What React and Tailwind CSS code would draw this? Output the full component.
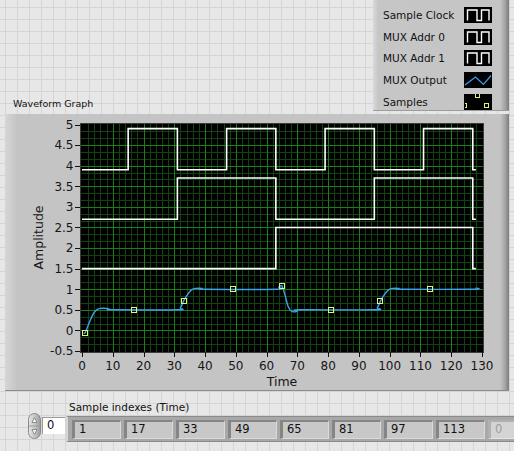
import React from "react";

const X = (t) => 82 + (t * 400) / 130;
const Y = (v) => 124.5 + (5 - v) * 41.18;
const px = (n) => Math.round(n) + 0.5;

function stepPath(trans, end) {
  let d = `M${X(trans[0][0]).toFixed(2)},${Y(trans[0][1]).toFixed(2)}`;
  for (let i = 1; i < trans.length; i++) {
    d += ` H${X(trans[i][0]).toFixed(2)} V${Y(trans[i][1]).toFixed(2)}`;
  }
  d += ` H${X(end).toFixed(2)}`;
  return d;
}

function smooth(pts) {
  const P = pts.map(([t, v]) => [X(t), Y(v)]);
  const f = (p) => `${p[0].toFixed(2)},${p[1].toFixed(2)}`;
  let d = `M${f(P[0])}`;
  for (let i = 0; i < P.length - 1; i++) {
    const p0 = P[i - 1] || P[i];
    const p1 = P[i];
    const p2 = P[i + 1];
    const p3 = P[i + 2] || P[i + 1];
    const c1 = [p1[0] + (p2[0] - p0[0]) / 6, p1[1] + (p2[1] - p0[1]) / 6];
    const c2 = [p2[0] - (p3[0] - p1[0]) / 6, p2[1] - (p3[1] - p1[1]) / 6];
    d += ` C${f(c1)} ${f(c2)} ${f(p2)}`;
  }
  return d;
}

const clock = [[0, 3.9], [15, 4.9], [31, 3.9], [47, 4.9], [63, 3.9], [79, 4.9], [95, 3.9], [111, 4.9], [127, 3.9]];
const addr0 = [[0, 2.7], [31, 3.7], [63, 2.7], [95, 3.7], [127, 2.7]];
const addr1 = [[0, 1.5], [63, 2.5], [127, 1.5]];

const mux = [
  [0.5, -0.06], [1, -0.06], [2, 0.12], [3, 0.3], [4, 0.44], [5, 0.51], [6, 0.535], [8, 0.535], [9, 0.51], [10, 0.5],
  [31, 0.5], [32, 0.55], [33, 0.71], [34, 0.84], [35, 0.94], [36, 1.0], [37, 1.02], [39, 1.02], [40, 1.0],
  [63, 1.0], [64, 1.05], [65, 1.08], [66, 0.85], [67, 0.58], [68, 0.47], [69, 0.45], [70, 0.47], [71, 0.5],
  [95, 0.5], [96, 0.55], [97, 0.71], [98, 0.84], [99, 0.94], [100, 1.0], [101, 1.02], [103, 1.02], [104, 1.0],
  [127, 1.0], [128, 1.03],
];

const samples = [[1, -0.06], [17, 0.5], [33, 0.71], [49, 1.0], [65, 1.08], [81, 0.5], [97, 0.71], [113, 1.0]];

function Chart() {
  const vLines = [];
  for (let t = 2; t < 130; t += 2) {
    vLines.push({ x: px(X(t)), major: t % 10 === 0 });
  }
  const hLines = [];
  for (let k = 1; k < 33; k++) {
    hLines.push({ y: px(Y(-0.5 + k / 6)), major: k % 3 === 0 });
  }
  const yTicks = [];
  for (let k = 0; k <= 11; k++) yTicks.push(-0.5 + k * 0.5);
  const xTicks = [];
  for (let t = 0; t <= 130; t += 10) xTicks.push(t);

  return (
    <svg width="504" height="277" viewBox="5 114 504 277" className="block" fontFamily="'DejaVu Sans', sans-serif">
      <rect x="81" y="124" width="402" height="228" fill="#000" />
      <g shapeRendering="crispEdges">
        {vLines.filter((l) => !l.major).map((l, i) => (
          <line key={"vm" + i} x1={l.x} x2={l.x} y1="124" y2="352" stroke="#124212" strokeWidth="1" />
        ))}
        {hLines.filter((l) => !l.major).map((l, i) => (
          <line key={"hm" + i} y1={l.y} y2={l.y} x1="81" x2="483" stroke="#124212" strokeWidth="1" />
        ))}
        {vLines.filter((l) => l.major).map((l, i) => (
          <line key={"vM" + i} x1={l.x} x2={l.x} y1="124" y2="352" stroke="#1a7e1a" strokeWidth="1" />
        ))}
        {hLines.filter((l) => l.major).map((l, i) => (
          <line key={"hM" + i} y1={l.y} y2={l.y} x1="81" x2="483" stroke="#1a7e1a" strokeWidth="1" />
        ))}
        <rect x="80.5" y="123.5" width="403" height="229" fill="none" stroke="#3c3c3c" strokeWidth="1" />
      </g>

      <path d={stepPath(clock, 128)} fill="none" stroke="#fff" strokeWidth="1.6" />
      <path d={stepPath(addr0, 128)} fill="none" stroke="#fff" strokeWidth="1.6" />
      <path d={stepPath(addr1, 128)} fill="none" stroke="#fff" strokeWidth="1.6" />
      <path d={smooth(mux)} fill="none" stroke="#3ba2ee" strokeWidth="1.4" />
      {samples.map(([t, v], i) => (
        <rect key={"s" + i} x={Math.round(X(t)) - 2.5} y={Math.round(Y(v)) - 2.5} width="5" height="5" fill="none" stroke="#e4f27a" strokeWidth="1" shapeRendering="crispEdges" />
      ))}

      <g shapeRendering="crispEdges">
        {yTicks.map((v) => (
          <line key={"yt" + v} x1="75" x2="80" y1={px(Y(v))} y2={px(Y(v))} stroke="#111" strokeWidth="1" />
        ))}
        {xTicks.map((t) => (
          <line key={"xt" + t} x1={px(X(t))} x2={px(X(t))} y1="352" y2="357" stroke="#111" strokeWidth="1" />
        ))}
      </g>
      {yTicks.map((v) => (
        <text key={"yl" + v} x="73.5" y={Y(v) + 4.3} textAnchor="end" fontSize="12" fill="#151515">
          {v === 0 ? "0" : String(v)}
        </text>
      ))}
      {xTicks.map((t) => (
        <text key={"xl" + t} x={X(t)} y="369.5" textAnchor="middle" fontSize="12" fill="#151515">
          {t}
        </text>
      ))}
      <text x="282" y="386" textAnchor="middle" fontSize="12.5" fill="#151515">Time</text>
      <text transform="translate(42.5 237.5) rotate(-90)" textAnchor="middle" fontSize="12.5" fill="#151515">Amplitude</text>
    </svg>
  );
}

function SquareSwatch() {
  return (
    <svg width="28" height="16" className="block">
      <rect width="28" height="16" fill="#000" />
      <path d="M3.5 13.5 V3 H13 V13.5 H17.5 V3 H25 V13.5" fill="none" stroke="#fff" strokeWidth="1.4" />
    </svg>
  );
}

function WaveSwatch() {
  return (
    <svg width="28" height="16" className="block">
      <rect width="28" height="16" fill="#000" />
      <path d="M1 13 L11.5 5 L19.5 12.5 L27 3.5" fill="none" stroke="#3ba2ee" strokeWidth="1.2" />
    </svg>
  );
}

function SampleSwatch() {
  return (
    <svg width="28" height="16" className="block">
      <rect width="28" height="16" fill="#000" />
      <path d="M0.5 9.5 H2.5 V13.5 H0.5" fill="none" stroke="#e4f27a" strokeWidth="1" shapeRendering="crispEdges" />
      <path d="M11.5 0 V3.5 H15.5 V0" fill="none" stroke="#e4f27a" strokeWidth="1" shapeRendering="crispEdges" />
      <rect x="20.5" y="9.5" width="4" height="4" fill="none" stroke="#e4f27a" strokeWidth="1" shapeRendering="crispEdges" />
    </svg>
  );
}

const legend = [
  ["Sample Clock", <SquareSwatch />],
  ["MUX Addr 0", <SquareSwatch />],
  ["MUX Addr 1", <SquareSwatch />],
  ["MUX Output", <WaveSwatch />],
  ["Samples", <SampleSwatch />],
];

const values = ["1", "17", "33", "49", "65", "81", "97", "113"];

function Spinner() {
  return (
    <svg width="15" height="26" className="block shrink-0">
      <defs>
        <linearGradient id="spg" x1="0" x2="1" y1="0" y2="0">
          <stop offset="0" stopColor="#e6e6e6" />
          <stop offset="0.5" stopColor="#c8c8c8" />
          <stop offset="1" stopColor="#9a9a9a" />
        </linearGradient>
      </defs>
      <rect x="1.5" y="0.5" width="12" height="25" rx="6" fill="url(#spg)" stroke="#8a8a8a" />
      <line x1="2" x2="13" y1="13" y2="13" stroke="#9a9a9a" />
      <path d="M7.5 4.5 L10 9.5 H5 Z" fill="#f4f4f4" stroke="#7a7a7a" strokeWidth="0.8" />
      <path d="M7.5 21.5 L10 16.5 H5 Z" fill="#f4f4f4" stroke="#7a7a7a" strokeWidth="0.8" />
    </svg>
  );
}

export default function App() {
  return (
    <div className="w-[514px] h-[451px] overflow-hidden flex flex-col text-[#111] font-['DejaVu_Sans',sans-serif] bg-[#e7e7e7] [background-image:linear-gradient(to_right,#d5d5d5_1px,transparent_1px),linear-gradient(to_bottom,#d5d5d5_1px,transparent_1px)] [background-size:12px_12px] [background-position:5px_7px]">
      <div className="flex items-end h-[111px] shrink-0">
        <div className="pl-[13px] pb-[1px] text-[9.5px] leading-[12px]">Waveform Graph</div>
        <div className="ml-auto mr-[5px] w-[136px] h-[111px] pt-[4px] pl-[10px] pr-[17px] flex flex-col border-b border-[#9c9c9c] bg-[linear-gradient(to_right,#dadada,#c6c6c6_5px,#c4c4c4_calc(100%_-_9px),#a4a4a4_calc(100%_-_4px),#7a7a7a)]">
          {legend.map(([name, sw]) => (
            <div key={name} className="h-[21.7px] shrink-0 flex items-center justify-between">
              <span className="text-[10.5px] leading-[12px]">{name}</span>
              {sw}
            </div>
          ))}
        </div>
      </div>

      <div className="mt-[3px] mx-[5px] h-[277px] shrink-0 border-b border-[#8a8a8a] bg-[linear-gradient(to_right,#d6d6d6,#c4c4c4_12px,#c4c4c4_calc(100%_-_9px),#a6a6a6_calc(100%_-_4px),#7c7c7c)]">
        <Chart />
      </div>

      <div className="mt-[10px] pl-[69px] text-[10.5px] leading-[12px] shrink-0">Sample indexes (Time)</div>

      <div className="flex items-start pl-[27px] shrink-0">
        <Spinner />
        <div className="mt-[4px] w-[23px] h-[17px] shrink-0 bg-white border-t border-l border-[#9a9a9a] text-[11.5px] leading-[15px] pl-[4px]">0</div>
        <div className="ml-[1px] mt-[3px] h-[26px] flex-1 flex gap-[3px] pl-[4px] pt-[3px] border-t border-[#8a8a8a] border-l-[2px] border-l-[#d6d6d6] border-b border-b-[#8a8a8a] bg-[#a8a8a8] overflow-hidden">
          {values.map((v) => (
            <div key={v} className="w-[49px] h-[19px] shrink-0 bg-[#c8c8c8] border-t-[2px] border-l-[3px] border-r border-b border-t-[#858585] border-l-[#858585] border-r-[#dadada] border-b-[#dadada] text-[11.5px] leading-[15px] pl-[4px]">
              {v}
            </div>
          ))}
          <div className="w-[49px] h-[19px] shrink-0 bg-[#d4d4d4] border-t-[2px] border-l-[3px] border-r border-b border-t-[#b0b0b0] border-l-[#b0b0b0] border-r-[#e4e4e4] border-b-[#e4e4e4] text-[11.5px] leading-[15px] pl-[4px] text-[#9c9c9c]">
            0
          </div>
        </div>
      </div>
    </div>
  );
}
